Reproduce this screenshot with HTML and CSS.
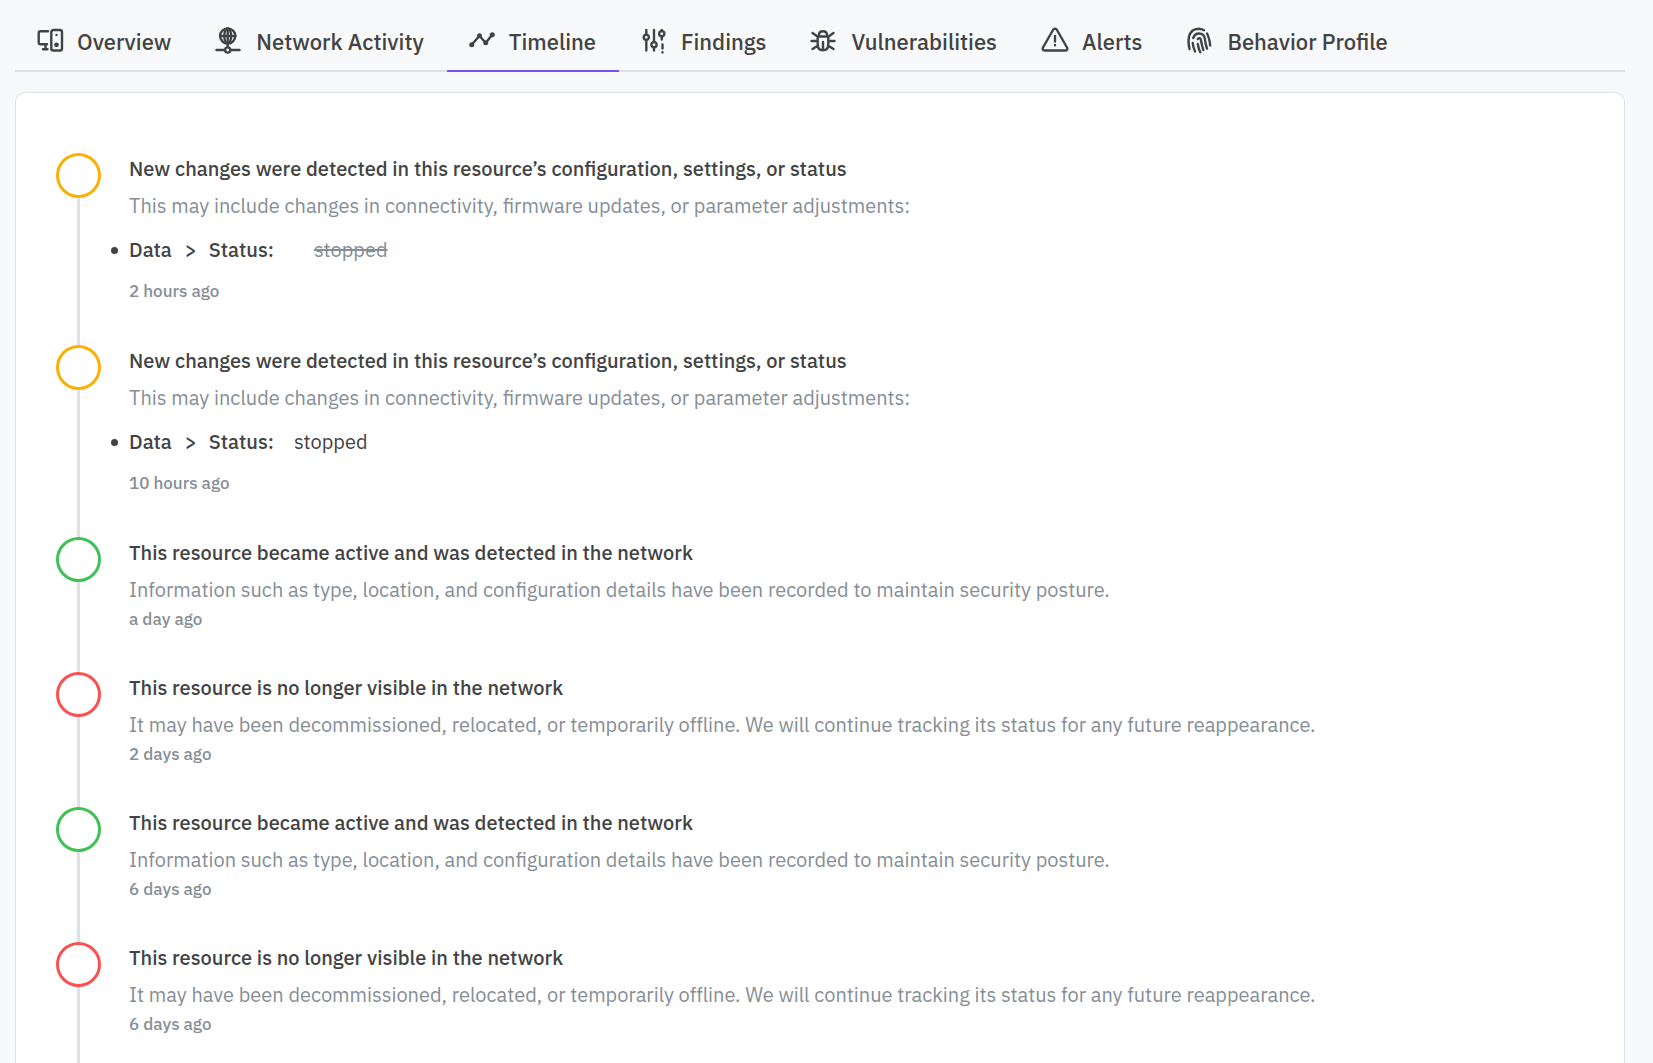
FILE: index.html
```html
<!DOCTYPE html>
<html lang="en">
<head>
  <meta charset="UTF-8">
  <meta name="viewport" content="width=device-width, initial-scale=1.0">
  <title>Resource Timeline</title>
  <link rel="stylesheet" href="styles.css">
</head>
<body>
  <nav class="tabs">
    <button class="tab" type="button">
      <svg class="icon" viewBox="0 0 28 28">
        <path d="M12 4.2H4.5Q2.7 4.2 2.7 6v9.5q0 1.8 1.8 1.8H11M9.5 17.5v4.5M7 22.2h4.5"/>
        <rect x="15.3" y="3" width="10.7" height="20.5" rx="2"/>
        <circle class="dot" cx="20.5" cy="8" r="1.2"/>
        <circle class="dot" cx="20.5" cy="17.8" r="2.4"/>
      </svg>
      Overview
    </button>
    <button class="tab" type="button">
      <svg class="icon" viewBox="0 0 28 28">
        <circle cx="12.7" cy="9" r="7.6"/>
        <ellipse cx="12.7" cy="9" rx="3.4" ry="7.6"/>
        <path d="M5 9h15.4M12.7 1.500V20M1.500 23H10M15.500 23h9"/>
        <circle cx="12.7" cy="23" r="2.6"/>
      </svg>
      Network Activity
    </button>
    <button class="tab active" type="button">
      <svg class="icon" viewBox="0 0 28 28">
        <path d="M3.7 17.7l7.8-9 6.2 7.3 6.6-8.5"/>
        <circle class="dot" cx="3.7" cy="17.7" r="2.5"/>
        <circle class="dot" cx="11.5" cy="8.8" r="2.5"/>
        <circle class="dot" cx="17.7" cy="15.8" r="2.5"/>
        <circle class="dot" cx="24.3" cy="7.7" r="2.5"/>
      </svg>
      Timeline
    </button>
    <button class="tab" type="button">
      <svg class="icon" viewBox="0 0 28 28">
        <path d="M6.3 3v4.500M6.3 13v10.500M14 3v12M14 20.500v3M21.800 3v1M21.800 9.500v3M22.500 17.500v4M22.500 25.300v.1"/>
        <circle cx="6.3" cy="10.3" r="2.6"/>
        <circle cx="14" cy="17.7" r="2.6"/>
        <circle cx="21.8" cy="6.7" r="2.6"/>
      </svg>
      Findings
    </button>
    <button class="tab" type="button">
      <svg class="icon" viewBox="0 0 28 28">
        <path d="M7.7 9.5h10.600v8q0 5.700-5.300 5.700t-5.300-5.700zM9 9V8q0-3.700 4-3.700t4 3.700v1M13 15v8M1.500 14h6M18.500 14h6M2.500 6l5 3.500M23.500 6l-5 3.500M2.500 22l5.500-3.500M23.500 22l-5.500-3.500"/>
      </svg>
      Vulnerabilities
    </button>
    <button class="tab" type="button">
      <svg class="icon" viewBox="0 0 28 28">
        <path d="M12.3 2.5q1.700-1.700 3.400 0L26 20.500q1 3-1.500 3h-21q-2.500 0-1.500-3zM14 9v5.500M14 18v.2"/>
      </svg>
      Alerts
    </button>
    <button class="tab" type="button">
      <svg class="icon" viewBox="0 0 28 28">
        <path d="M3.5 22Q1.8 15 3 9.500 5 2 12.500 1.700q3 0 5.500 1.500M21 6.500q2.300 4 3.200 12M7.200 11q1.500-4.500 5.800-4.500 5 0 5.800 5 .5 5 2.200 10M6.800 16q.2 4 2.200 8.500M11.800 12q1.700-2 3 .500 1 5.500 2.500 10.500M11.800 17q.5 4 2.500 8.300"/>
      </svg>
      Behavior Profile
    </button>
  </nav>

  <main class="card">
    <ol class="timeline">
      <li class="event changed">
        <h2>New changes were detected in this resource’s configuration, settings, or status</h2>
        <p>This may include changes in connectivity, firmware updates, or parameter adjustments:</p>
        <ul class="changes">
          <li><strong>Data</strong><span class="arrow">&gt;</span><strong>Status:</strong><del>stopped</del></li>
        </ul>
        <time>2 hours ago</time>
      </li>
      <li class="event changed">
        <h2>New changes were detected in this resource’s configuration, settings, or status</h2>
        <p>This may include changes in connectivity, firmware updates, or parameter adjustments:</p>
        <ul class="changes">
          <li><strong>Data</strong><span class="arrow">&gt;</span><strong>Status:</strong><ins>stopped</ins></li>
        </ul>
        <time>10 hours ago</time>
      </li>
      <li class="event online">
        <h2>This resource became active and was detected in the network</h2>
        <p>Information such as type, location, and configuration details have been recorded to maintain security posture.</p>
        <time>a day ago</time>
      </li>
      <li class="event offline">
        <h2>This resource is no longer visible in the network</h2>
        <p>It may have been decommissioned, relocated, or temporarily offline. We will continue tracking its status for any future reappearance.</p>
        <time>2 days ago</time>
      </li>
      <li class="event online">
        <h2>This resource became active and was detected in the network</h2>
        <p>Information such as type, location, and configuration details have been recorded to maintain security posture.</p>
        <time>6 days ago</time>
      </li>
      <li class="event offline">
        <h2>This resource is no longer visible in the network</h2>
        <p>It may have been decommissioned, relocated, or temporarily offline. We will continue tracking its status for any future reappearance.</p>
        <time>6 days ago</time>
      </li>
    </ol>
  </main>
</body>
</html>
```

FILE: styles.css
```css
*,
*::before,
*::after {
  box-sizing: border-box;
}
body {
  margin: 0;
  padding: 12px 28px 0 15px;
  background: #f8f9fb;
  color: #434343;
  font-family: "IBM Plex Sans", Roboto, sans-serif;
  font-size: 20px;
}

/* Tabs */
.tabs {
  display: flex;
  border-bottom: 2px solid #dee0e8;
}
.tab {
  display: flex;
  align-items: center;
  gap: 13px;
  height: 60px;
  margin-bottom: -2px;
  padding: 0 23px 0 21px;
  border: 0;
  border-bottom: 2px solid transparent;
  background: none;
  color: inherit;
  font-family: inherit;
  font-size: 22px;
  font-weight: 500;
  white-space: nowrap;
  cursor: pointer;
}
.tab.active {
  border-bottom-color: #7950f2;
}
.icon {
  width: 28px;
  height: 28px;
  fill: none;
  stroke: currentColor;
  stroke-width: 2.4;
  stroke-linecap: round;
  stroke-linejoin: round;
}
.icon .dot {
  fill: currentColor;
  stroke: none;
}

/* Card */
.card {
  margin-top: 20px;
  padding: 60px 40px 0;
  border: 1px solid #dee2e6;
  border-bottom: 0;
  border-radius: 10px 10px 0 0;
  background: #fff;
}
.timeline {
  margin: 0;
  padding: 0;
  list-style: none;
}
.event {
  position: relative;
  padding: 0 0 39px 73px;
}
/* Line joining the events */
.event::before {
  content: "";
  position: absolute;
  top: 0;
  bottom: 0;
  left: 21px;
  width: 3px;
  background: #dee2e6;
}
.event::after {
  content: "";
  position: absolute;
  top: 0;
  left: 0;
  width: 45px;
  height: 45px;
  border: 3px solid;
  border-radius: 50%;
  background: #fff;
}
.changed {
  padding-bottom: 40px;
}
.changed::after {
  border-color: #fab005;
}
.online::after {
  border-color: #40c057;
}
.offline::after {
  border-color: #fa5252;
}
.event h2 {
  margin: 0 0 6px;
  font-size: 20px;
  font-weight: 500;
  line-height: 32px;
}
.event p {
  margin: 0;
  color: #868e96;
  line-height: 30px;
}
.event time {
  display: block;
  color: #868e96;
  font-size: 17px;
  font-weight: 500;
  line-height: 28px;
}

/* Changed values */
.changes {
  margin: 14px 0 12px -18px;
  padding: 0;
  line-height: 30px;
  list-style: none;
}
.changes li {
  display: flex;
  align-items: center;
}
.changes li::before {
  content: "";
  width: 7px;
  height: 7px;
  margin-right: 11px;
  border-radius: 50%;
  background: currentColor;
}
.changes strong {
  font-weight: 500;
}
.arrow {
  margin: 0 12px 0 13px;
  font-weight: 500;
}
.changes del {
  margin-left: 40px;
  color: #868e96;
}
.changes ins {
  margin-left: 20px;
  text-decoration: none;
}
```
